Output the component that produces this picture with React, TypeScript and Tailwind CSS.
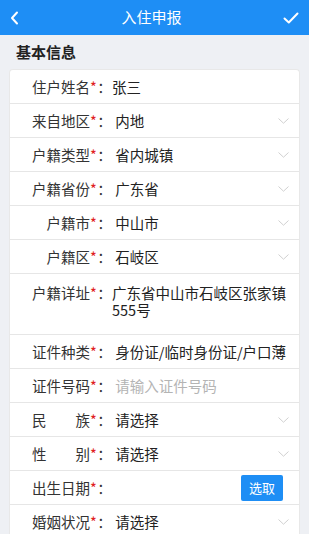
import React from 'react';

type Row = {
  label: string;
  value?: string;
  placeholder?: string;
  select?: boolean;
  spread?: boolean;
  tall?: boolean;
  button?: string;
};

const rows: Row[] = [
  { label: '住户姓名', value: '张三' },
  { label: '来自地区', value: ' 内地', select: true },
  { label: '户籍类型', value: ' 省内城镇', select: true },
  { label: '户籍省份', value: ' 广东省', select: true },
  { label: '户籍市', value: ' 中山市', select: true },
  { label: '户籍区', value: ' 石岐区', select: true },
  { label: '户籍详址', value: '广东省中山市石岐区张家镇555号', tall: true },
  { label: '证件种类', value: ' 身份证/临时身份证/户口薄' },
  { label: '证件号码', placeholder: '请输入证件号码' },
  { label: '民族', value: ' 请选择', select: true, spread: true },
  { label: '性别', value: ' 请选择', select: true, spread: true },
  { label: '出生日期', button: '选取' },
  { label: '婚姻状况', value: ' 请选择', select: true },
];

function ChevronDown() {
  return (
    <svg width="11" height="6" viewBox="0 0 11 6" fill="none" className="shrink-0">
      <path d="M0.5 0.5L5.5 5.2L10.5 0.5" stroke="#d0d0d0" strokeWidth="1" />
    </svg>
  );
}

function Label({ row }: { row: Row }) {
  return (
    <div className="flex shrink-0 text-[#333] whitespace-nowrap">
      <div className="w-[80px] flex justify-end">
        {row.spread ? (
          <span className="inline-flex w-[58px] justify-between">
            <span>{row.label[0]}</span>
            <span>{row.label[1]}</span>
          </span>
        ) : (
          <span>{row.label}</span>
        )}
      </div>
      <span className="w-[7px] text-[#e02020]">*</span>
      <span className="w-[15px] flex justify-center">：</span>
    </div>
  );
}

function FormRow({ row }: { row: Row }) {
  if (row.tall) {
    return (
      <div className="flex items-start h-[61px] pt-[10px] border-b border-[#e6e6e6]">
        <div className="leading-[17px] flex w-full">
          <Label row={row} />
          <div className="flex-1 pr-[12px] text-[#222] break-all">{row.value}</div>
        </div>
      </div>
    );
  }
  return (
    <div className="flex items-center h-[34px] border-b border-[#e6e6e6] pr-[10px]">
      <Label row={row} />
      <div className="flex-1 min-w-0 whitespace-pre">
        {row.placeholder ? (
          <span className="text-[#b4b4b4]"> {row.placeholder}</span>
        ) : (
          <span className="text-[#222]">{row.value}</span>
        )}
      </div>
      {row.select && <ChevronDown />}
      {row.button && (
        <button className="mr-[6px] h-[26px] w-[42px] rounded-[2px] bg-[#1e8ef5] text-white text-[13px] leading-none">
          {row.button}
        </button>
      )}
    </div>
  );
}

export default function App() {
  return (
    <div
      className="w-[309px] h-[534px] overflow-hidden bg-[#eef0f4] text-[14.5px]"
      style={{ fontFamily: '"Noto Sans CJK SC", "Noto Sans", sans-serif' }}
    >
      <header className="h-[35px] bg-[#1e8ef5] flex items-center justify-between px-[10px] text-white">
        <svg width="10" height="14" viewBox="0 0 10 14" fill="none">
          <path d="M7 1.5L2 7L7 12.5" stroke="white" strokeWidth="2" strokeLinecap="round" strokeLinejoin="round" />
        </svg>
        <h1 className="text-[15px]">入住申报</h1>
        <svg width="16" height="12" viewBox="0 0 16 12" fill="none">
          <path d="M1.5 6.5L5.8 10.5L14.5 1.5" stroke="white" strokeWidth="2" strokeLinecap="round" strokeLinejoin="round" />
        </svg>
      </header>
      <div className="h-[34px] flex items-center pl-[16px] text-[15px] font-bold text-[#222]">基本信息</div>
      <div className="mx-[9px] bg-white rounded-t-[4px] border border-b-0 border-[#e8e8e8]">
        {rows.map((r) => (
          <FormRow key={r.label} row={r} />
        ))}
      </div>
    </div>
  );
}
